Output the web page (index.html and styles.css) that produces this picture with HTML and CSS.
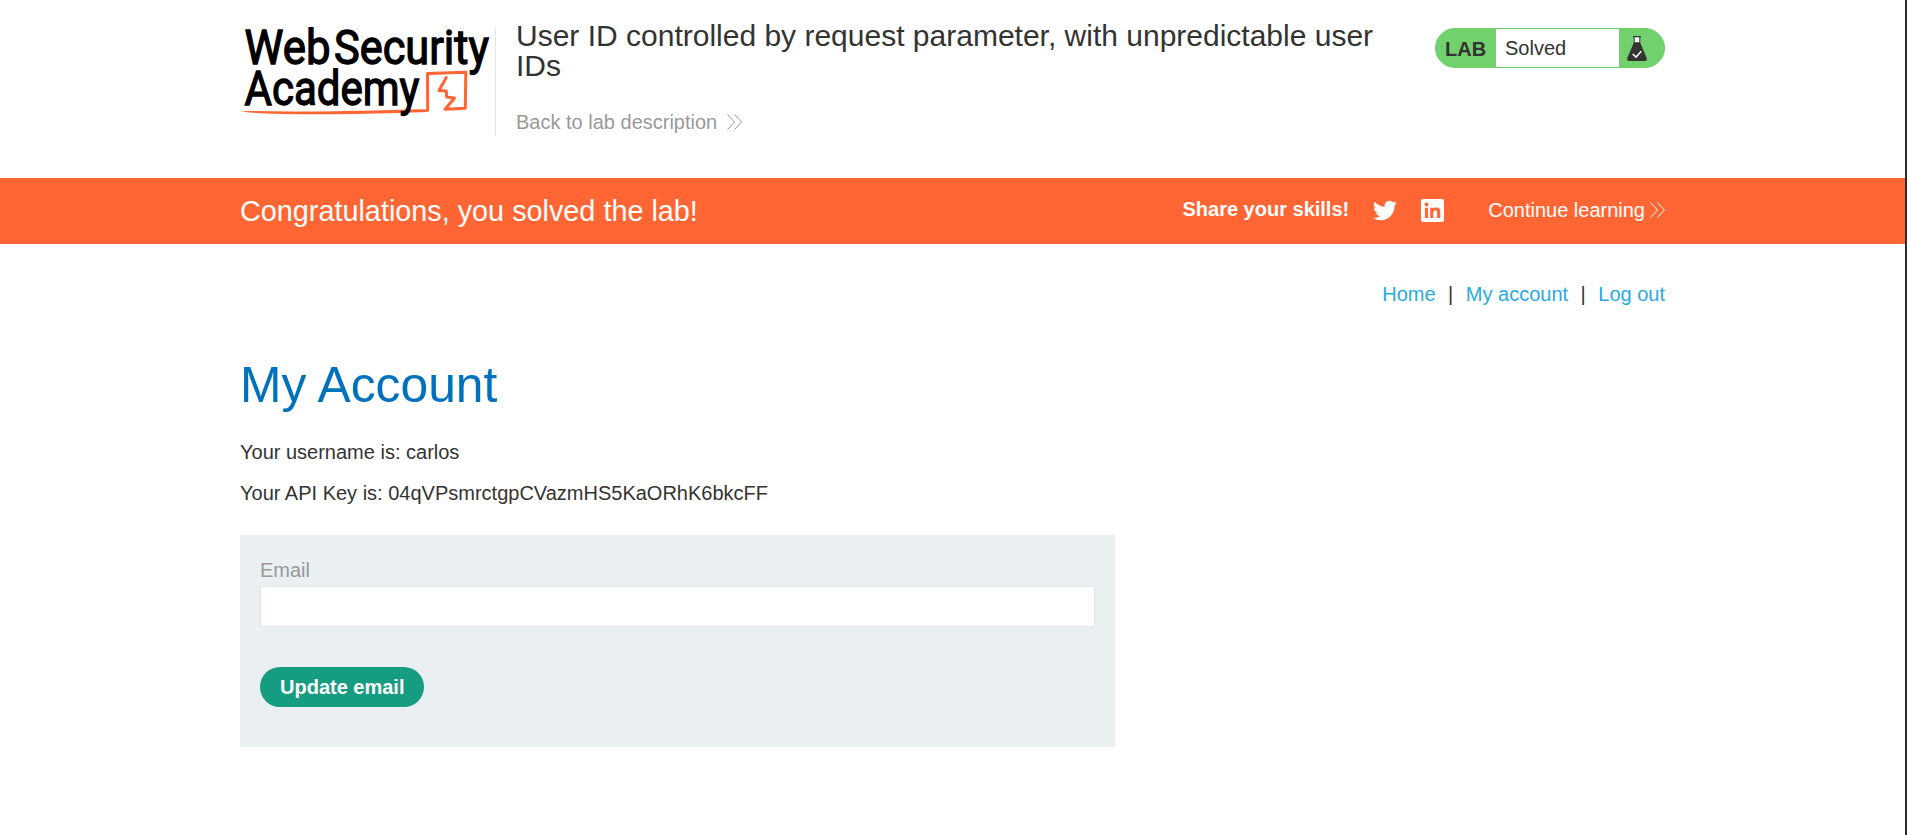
FILE: index.html
```
<!DOCTYPE html>
<html lang="en">
<head>
<meta charset="utf-8">
<title>User ID controlled by request parameter, with unpredictable user IDs</title>
<link rel="stylesheet" href="styles.css">
</head>
<body>
<header class="lab-header container">
  <svg class="logo" width="255" height="108" viewBox="240 28 255 108" role="img" aria-label="Web Security Academy">
    <path class="logo-underline" d="M240 111.200Q260 110.800 290 111.600Q340 111.700 407 109.500L427 109.200L427 112L400 113Q330 114.800 282 114Q255 113.500 240 111.200Z"/>
    <path class="logo-mark" d="M427.700 110.200L427.500 73.500L465.800 72.300L465.300 108.300L445 109.300L454.500 98L446.700 97L446.300 91L439 90.500L446.300 77.500"/>
    <g class="logo-text">
      <text x="244.500" y="63.500" textLength="86" lengthAdjust="spacingAndGlyphs">Web</text>
      <text x="334" y="63.500" textLength="155" lengthAdjust="spacingAndGlyphs">Security</text>
      <text x="244.500" y="104.500" textLength="175" lengthAdjust="spacingAndGlyphs">Academy</text>
    </g>
  </svg>
  <div class="title-block">
    <h2 class="lab-title">User ID controlled by request parameter, with unpredictable user IDs</h2>
    <a class="back-link">Back to lab description<svg class="chevrons back-chevrons" width="15" height="16" viewBox="0 0 15 16"><path d="M.5.500L7.500 8L.5 15.500M7.500.500L14.500 8L7.500 15.500"/></svg></a>
  </div>
  <div class="badge">
    <span class="badge-label">LAB</span>
    <span class="badge-status">Solved</span>
    <svg class="flask" width="20" height="25" viewBox="0 0 20 25">
      <path class="flask-neck" d="M7 1h6v6H7z"/>
      <path class="flask-dark" d="M6 0h8v1.300H6zM6.700 1h1v5.500h-1zM12.300 1h1v5.500h-1zM7 6.300h6L19.700 22Q20.500 25 18 25H2Q-.5 25 .3 22Z"/>
      <path class="flask-check" d="M5.700 18L9 21L14.300 15.200"/>
    </svg>
  </div>
</header>
<section class="banner">
  <div class="banner-inner container">
    <h4 class="banner-title">Congratulations, you solved the lab!</h4>
    <span class="share">Share your skills!</span>
    <svg class="twitter" width="24" height="21" viewBox="0 2 24 20"><path d="M23.950 4.570a10 10 0 0 1-2.820.770 4.960 4.960 0 0 0 2.160-2.720c-.950.550-2 .950-3.130 1.180a4.920 4.920 0 0 0-8.380 4.480C7.690 8.090 4.070 6.130 1.640 3.160a4.920 4.920 0 0 0 1.520 6.570 4.900 4.900 0 0 1-2.230-.610v.060a4.920 4.920 0 0 0 3.950 4.830 5 5 0 0 1-2.210.080 4.940 4.940 0 0 0 4.600 3.420A9.870 9.870 0 0 1 0 19.540a14 14 0 0 0 7.550 2.210c9.050 0 14-7.500 14-13.980 0-.210 0-.420-.020-.630a9.940 9.940 0 0 0 2.420-2.570z"/></svg>
    <svg class="linkedin" width="23" height="23" viewBox="0 0 23 23"><rect width="23" height="23" rx="2"/><g class="in-mark"><circle cx="5.500" cy="5.500" r="1.900"/><path d="M3.900 8.800h3.200v10.200H3.900zM9.200 8.800h3v1.400c.6-1 1.800-1.700 3.200-1.700 3 0 3.900 1.900 3.900 4.800V19h-3.200v-5c0-1.400-.2-2.700-1.800-2.700s-2 1.300-2 2.600V19H9.200z"/></g></svg>
    <a class="continue">Continue learning<svg class="chevrons" width="15" height="16" viewBox="0 0 15 16"><path d="M.5.500L7.500 8L.5 15.500M7.500.500L14.500 8L7.500 15.500"/></svg></a>
  </div>
</section>
<main class="container">
  <nav class="links"><a>Home</a><span>|</span><a>My account</a><span>|</span><a>Log out</a></nav>
  <h1 class="page-title">My Account</h1>
  <p class="detail">Your username is: carlos</p>
  <p class="detail">Your API Key is: 04qVPsmrctgpCVazmHS5KaORhK6bkcFF</p>
  <form class="email-form">
    <label class="email-label" for="email">Email</label>
    <input class="email-input" id="email" type="email">
    <button class="update-button" type="button">Update email</button>
  </form>
</main>
</body>
</html>
```
FILE: styles.css
```
* { box-sizing: border-box; }
html { height: 100%; }
body {
  margin: 0;
  min-height: 100%;
  border-right: 2px solid #2b2c2f;
  background: #fff;
  color: #333332;
  font: 20px/23px "Liberation Sans", Arial, sans-serif;
}
.container { width: 1425px; margin: 0 auto; }
h1, h2, h4, p { margin: 0; font-weight: 400; }
svg { display: block; flex: none; }

.lab-header { display: flex; align-items: flex-start; height: 178px; padding-top: 28px; }
.logo { overflow: visible; }
.logo-text { font-family: Roboto, sans-serif; font-size: 47.500px; font-weight: 400; fill: #000; stroke: #000; stroke-width: 1.300; }
.logo-underline { fill: #ff6633; }
.logo-mark { fill: none; stroke: #ff6633; stroke-width: 3; stroke-linejoin: round; stroke-linecap: round; }
.title-block { flex: none; width: 900px; height: 108px; border-left: 1px solid #e5e5e5; padding-left: 20px; }
.lab-title { margin-top: -7px; font-size: 30px; line-height: 30px; }
.back-link { display: flex; margin-top: 30px; color: #999; }
.chevrons { fill: none; stroke: currentColor; stroke-width: 1; }
.back-chevrons { margin: 3px 0 0 10px; }
.badge {
  display: flex;
  width: 230px;
  height: 40px;
  margin-left: auto;
  border: 1px solid #70d16d;
  border-radius: 20px;
  background: #70d16d;
  line-height: 38px;
}
.badge-label { width: 60px; padding: 1px 0 0 9px; font-weight: 700; }
.badge-status { width: 123px; padding-left: 9px; background: #fff; }
.flask { margin: 7px 0 0 8px; }
.flask-neck { fill: #fff; }
.flask-dark { fill: #333332; }
.flask-check { fill: none; stroke: #fff; stroke-width: 1.600; }

.banner { height: 66px; background: #ff6633; color: #fff; }
.banner-inner { display: flex; align-items: flex-start; height: 66px; }
.banner-title { margin: 17px auto 0 0; font-size: 28.800px; line-height: 32px; }
.share { margin: 20px 24px 0 0; font-weight: 700; }
.twitter { margin: 22px 24px 0 0; fill: #fff; }
.linkedin { margin: 21px 44px 0 0; fill: #fff; }
.in-mark { fill: #ff6633; }
.continue { display: flex; gap: 5px; margin-top: 21px; }
.continue .chevrons { margin-top: 3px; }

.links { display: flex; justify-content: flex-end; padding-top: 39px; }
.links a { color: #29aae3; }
.links span { margin: 0 12.500px; }
.page-title { margin: 50px 0 27px; color: #0071bd; font-size: 49.800px; line-height: 58px; }
.detail { margin-bottom: 18px; }
.email-form { width: 875px; height: 212px; margin-top: 30px; padding: 24px 20px 0; background: #eaeff2; }
.email-label { display: block; color: #999; }
.email-input { display: block; width: 835px; height: 41px; margin: 4px 0 40px; border: 1px solid #e5e5e5; background: #fff; }
.update-button { display: block; height: 40px; padding: 0 20px; border: 0; border-radius: 20px; background: #169c80; color: #fff; font: 700 20px/40px "Liberation Sans", Arial, sans-serif; }
```
